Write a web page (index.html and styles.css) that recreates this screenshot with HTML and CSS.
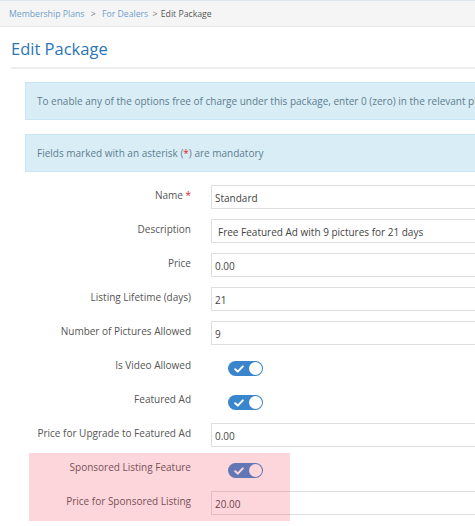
FILE: index.html
```html
<!DOCTYPE html>
<html>
<head>
<meta charset="utf-8">
<link rel="stylesheet" href="styles.css">
</head>
<body>
<div class="page">
  <div class="breadcrumb">
    <a class="crumb">Membership Plans</a>
    <span class="sep">&gt;</span>
    <a class="crumb">For Dealers</a>
    <span class="sep2">&gt;</span>
    <span class="current">Edit Package</span>
  </div>
  <div class="content">
    <h1 class="title">Edit Package</h1>
    <div class="rule"></div>
    <div class="alerts">
      <div class="alert">To enable any of the options free of charge under this package, enter 0 (zero) in the relevant place.</div>
      <div class="alert">Fields marked with an asterisk (<span class="star">*</span>) are mandatory</div>
    </div>
    <div class="form">
      <div class="row"><label class="lbl">Name <span class="req">*</span></label><div class="input">Standard</div></div>
      <div class="row"><label class="lbl">Description</label><div class="input desc">Free Featured Ad with 9 pictures for 21 days</div></div>
      <div class="row"><label class="lbl">Price</label><div class="input">0.00</div></div>
      <div class="row"><label class="lbl">Listing Lifetime (days)</label><div class="input">21</div></div>
      <div class="row"><label class="lbl">Number of Pictures Allowed</label><div class="input">9</div></div>
      <div class="row"><label class="lbl">Is Video Allowed</label><div class="toggle-cell"><span class="toggle"><svg class="check" viewBox="0 0 10 8" width="10" height="8"><path d="M1.2 4.2 L3.8 6.6 L8.8 1.4" fill="none" stroke="#fff" stroke-width="2" stroke-linecap="round" stroke-linejoin="round"/></svg><span class="knob"></span></span></div></div>
      <div class="row"><label class="lbl">Featured Ad</label><div class="toggle-cell"><span class="toggle"><svg class="check" viewBox="0 0 10 8" width="10" height="8"><path d="M1.2 4.2 L3.8 6.6 L8.8 1.4" fill="none" stroke="#fff" stroke-width="2" stroke-linecap="round" stroke-linejoin="round"/></svg><span class="knob"></span></span></div></div>
      <div class="row"><label class="lbl">Price for Upgrade to Featured Ad</label><div class="input">0.00</div></div>
      <div class="row"><label class="lbl">Sponsored Listing Feature</label><div class="toggle-cell"><span class="toggle"><svg class="check" viewBox="0 0 10 8" width="10" height="8"><path d="M1.2 4.2 L3.8 6.6 L8.8 1.4" fill="none" stroke="#fff" stroke-width="2" stroke-linecap="round" stroke-linejoin="round"/></svg><span class="knob"></span></span></div></div>
      <div class="row"><label class="lbl">Price for Sponsored Listing</label><div class="input">20.00</div></div>
    </div>
  </div>
  <div class="highlight"></div>
</div>
</body>
</html>
```

FILE: styles.css
```css
html, body {
  margin: 0;
  padding: 0;
  overflow: hidden;
  background: #fff;
}
.page {
  position: relative;
  width: 475px;
  height: 526px;
  overflow: hidden;
  font-family: "Open Sans", "Liberation Sans", sans-serif;
  font-size: 10px;
  color: #555;
}
.breadcrumb {
  height: 27px;
  box-sizing: border-box;
  background: #f5f5f5;
  border-top: 1px solid #dde6ee;
  border-bottom: 1px solid #e6e6e6;
  padding-left: 9px;
  font-size: 8.7px;
  line-height: 26px;
  white-space: nowrap;
}
.crumb { color: #6f9fcb; }
.sep { color: #777; margin: 0 4px; }
.sep2 { color: #777; margin: 0 1px 0 2px; }
.current { color: #555; }
.content {
  padding-left: 11px;
  width: 700px;
}
.title {
  margin: 0;
  padding-top: 10px;
  font-size: 16.5px;
  font-weight: 400;
  line-height: 24px;
  color: #2d75b8;
}
.rule {
  margin-top: 6px;
  height: 2px;
  background: #eeeeee;
}
.alerts {
  margin-left: 14px;
  padding-top: 13px;
  display: flex;
  flex-direction: column;
  gap: 14px;
}
.alert {
  height: 38px;
  box-sizing: border-box;
  background: #d9edf7;
  border: 1px solid #c9e6f4;
  padding-left: 11px;
  line-height: 36px;
  color: #5f7d8e;
  white-space: nowrap;
  overflow: hidden;
}
.star { color: #e0262c; }
.form {
  padding-top: 13px;
  display: flex;
  flex-direction: column;
  gap: 10px;
}
.row {
  display: grid;
  grid-template-columns: 180px 460px;
  column-gap: 20px;
  height: 24px;
}
.lbl {
  text-align: right;
  line-height: 16px;
  padding-top: 2px;
  white-space: nowrap;
  color: #555;
}
.req { color: #e0262c; }
.input {
  height: 24px;
  box-sizing: border-box;
  border: 1px solid #dedede;
  padding-left: 3px;
  line-height: 24px;
  color: #444;
  background: #fff;
}
.input.desc { padding-left: 6px; }
.toggle-cell {
  display: flex;
  align-items: flex-start;
  padding-left: 17px;
  padding-top: 6px;
}
.toggle {
  position: relative;
  display: inline-flex;
  align-items: center;
  width: 35px;
  height: 15px;
  border-radius: 8px;
  background: #3a86cc;
}
.check { margin-left: 6px; }
.knob {
  position: absolute;
  right: 1px;
  top: 1px;
  width: 13px;
  height: 13px;
  border-radius: 50%;
  background: #fff;
}
.highlight {
  position: absolute;
  left: 29px;
  top: 453px;
  width: 261px;
  height: 68px;
  background: rgba(246, 70, 95, 0.22);
}
```
